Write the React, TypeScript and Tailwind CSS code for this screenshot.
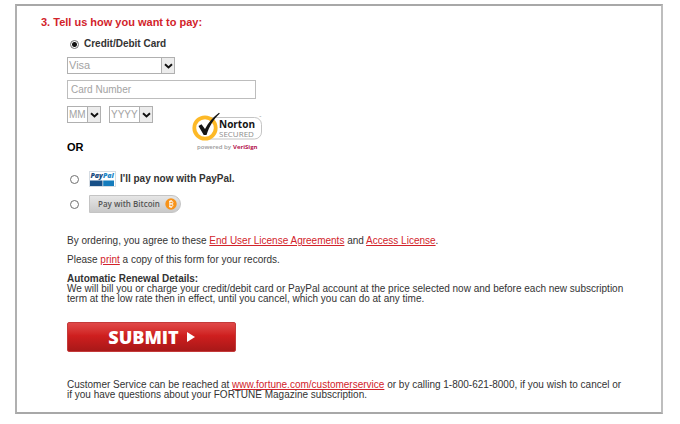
import type { ReactNode } from "react";

type DropdownProps = {
  label: string;
  options: string[];
  className: string;
};

function Dropdown({ label, options, className }: DropdownProps) {
  return (
    <div className={`relative h-[17px] border border-[#b0b0b0] bg-white ${className}`}>
      <select
        aria-label={label}
        className="block h-full w-full appearance-none bg-transparent pl-px leading-[15px] text-[#a3a3a3] outline-none"
      >
        {options.map((option) => (
          <option key={option}>{option}</option>
        ))}
      </select>
      <span className="pointer-events-none absolute inset-y-0 right-0 flex w-[13px] items-center justify-center border-l border-[#b0b0b0] bg-[#ececec]">
        <svg className="h-[6px] w-[9px]" viewBox="0 0 9 6" fill="none">
          <path d="M1 1.2 4.5 4.5 8 1.2" stroke="#111" strokeWidth="1.9" />
        </svg>
      </span>
    </div>
  );
}

function Radio({ id, checked }: { id: string; checked?: boolean }) {
  return (
    <input
      id={id}
      type="radio"
      name="payment"
      defaultChecked={checked}
      className="m-0 h-[9px] w-[9px] shrink-0 appearance-none rounded-full border border-[#707070] bg-white checked:bg-[radial-gradient(circle,#111_0_2px,#fff_3px)]"
    />
  );
}

function RedLink({ href, children }: { href: string; children: ReactNode }) {
  return (
    <a href={href} className="text-[#d2232a] underline">
      {children}
    </a>
  );
}

function NortonSeal() {
  return (
    <svg
      className="h-10 w-[72px]"
      viewBox="0 0 72 40"
      role="img"
      aria-label="Norton Secured, powered by VeriSign"
    >
      <path d="M14 5.5h48.500a7 7 0 0 1 7 7v7.500a7 7 0 0 1-7 7H14" fill="#fff" stroke="#b5b5b5" strokeWidth="0.8" />
      <circle cx="13" cy="16" r="10.700" fill="#fff" stroke="#fdb927" strokeWidth="3.800" />
      <path d="M6.500 14 9.500 12.200 13 17C16.500 10.500 21 5 27 .8l.8.8C21.500 7.500 17.500 14 14.500 23h-2.800Z" fill="#151515" />
      <text x="27" y="16" fontFamily="'Open Sans', sans-serif" fontSize="10" fontWeight="700" fill="#151515">
        Norton
      </text>
      <text x="27" y="25" fontFamily="'Open Sans', sans-serif" fontSize="8" fill="#8d8d8d">
        SECURED
      </text>
      <text x="5" y="37" fontFamily="'Open Sans', sans-serif" fontSize="6" fontWeight="600" fill="#999">
        powered by
      </text>
      <text x="41" y="37" fontFamily="'Open Sans', sans-serif" fontSize="6" fontWeight="700" fill="#b5124d">
        VeriSign
      </text>
      <text x="67" y="6" fontFamily="'Open Sans', sans-serif" fontSize="3" fill="#888">
        ™
      </text>
    </svg>
  );
}

function PayPalLogo() {
  return (
    <svg className="h-4 w-[27px]" viewBox="0 0 27 16" role="img" aria-label="PayPal">
      <rect x=".5" y=".5" width="26" height="15" fill="#fff" stroke="#d5dce3" />
      <text x="1.500" y="7" fontFamily="'Open Sans', sans-serif" fontSize="7" fontWeight="800" fontStyle="italic">
        <tspan fill="#174a80">Pay</tspan>
        <tspan fill="#1b86c8">Pal</tspan>
      </text>
      <path d="M1 9.500h12.500V15H1Z" fill="#174f87" />
      <path d="M14.200 9.500H25V15H14.200Z" fill="#147cbd" />
    </svg>
  );
}

function BitcoinBadge() {
  return (
    <span className="flex h-[18px] w-[92px] items-center justify-between rounded-l-[3px] rounded-r-full border border-[#c4c4c4] bg-linear-to-b from-[#e6e6e6] to-[#c9c9c9] pr-[3px] pl-2 font-['Open_Sans',sans-serif] text-[8px] leading-none font-semibold whitespace-nowrap text-[#555]">
      Pay with Bitcoin
      <svg className="h-3 w-3 shrink-0" viewBox="0 0 12 12">
        <circle cx="6" cy="6" r="5.700" fill="#f7931a" />
        <path
          d="M4 3.400h2.700a1.200 1.200 0 0 1 0 2.500H4.800h2.100a1.400 1.400 0 0 1 0 2.700H4M4.800 3.400v5.200M5.300 2.200v1M6.600 2.200v1M5.300 8.800v1M6.600 8.800v1"
          fill="none"
          stroke="#fff"
          strokeWidth=".9"
        />
      </svg>
    </span>
  );
}

export default function App() {
  return (
    <main className="bg-white pt-1 pr-[17px] pb-3 pl-[15px] font-['Liberation_Sans',Arial,sans-serif] text-[10px] leading-[10px] text-[#333]">
      <form
        className="border-2 border-t-[#a8a8a8] border-r-[#bebebe] border-b-[#a8a8a8] border-l-[#b0b0b0] pt-2 pr-8 pb-3 pl-6"
        onSubmit={(e) => e.preventDefault()}
      >
        <h2 className="text-[11px] leading-4 font-bold text-[#d2232a]">3. Tell us how you want to pay:</h2>

        <div className="pl-[26px]">
          {/* Card details */}
          <div className="mt-[6px] flex h-4 items-center gap-[5px] pl-[3px]">
            <Radio id="card" checked />
            <label htmlFor="card" className="font-bold">Credit/Debit Card</label>
          </div>
          <Dropdown
            label="Card type"
            options={["Visa", "MasterCard", "American Express"]}
            className="mt-[5px] w-[108px] text-[11px]"
          />
          <input
            type="text"
            aria-label="Card number"
            placeholder="Card Number"
            className="mt-[6px] block h-[19px] w-[189px] border border-[#bdbdbd] px-[3px] outline-none placeholder:text-[#a3a3a3]"
          />
          <div className="mt-[7px] flex items-start">
            <div className="w-[125px]">
              <div className="flex gap-2">
                <Dropdown label="Expiration month" options={["MM", "01", "02", "03"]} className="w-[34px]" />
                <Dropdown label="Expiration year" options={["YYYY", "2015", "2016", "2017"]} className="w-11" />
              </div>
              <p className="mt-4 text-[11px] leading-4 font-bold text-black">OR</p>
            </div>
            <div className="pt-[6px]">
              <NortonSeal />
            </div>
          </div>

          {/* Other ways to pay */}
          <div className="mt-[14px] flex h-5 items-center gap-[10px] pl-[3px]">
            <Radio id="paypal" />
            <label htmlFor="paypal" className="flex items-center gap-1 font-bold">
              <PayPalLogo />
              I'll pay now with PayPal.
            </label>
          </div>
          <div className="mt-[6px] flex h-[18px] items-center gap-[10px] pl-[3px]">
            <Radio id="bitcoin" />
            <label htmlFor="bitcoin">
              <BitcoinBadge />
            </label>
          </div>

          {/* Terms */}
          <p className="mt-[23px]">
            By ordering, you agree to these <RedLink href="#eula">End User License Agreements</RedLink> and{" "}
            <RedLink href="#access">Access License</RedLink>.
          </p>
          <p className="mt-[9px]">
            Please <RedLink href="#print">print</RedLink> a copy of this form for your records.
          </p>
          <h3 className="mt-[9px] font-bold">Automatic Renewal Details:</h3>
          <p>
            We will bill you or charge your credit/debit card or PayPal account at the price selected now and before each
            new subscription
            <br />
            term at the low rate then in effect, until you cancel, which you can do at any time.
          </p>

          <button
            type="submit"
            className="mt-[18px] flex h-[30px] w-[169px] items-center justify-center gap-2 rounded-[2px] border border-[#c43a3a] bg-linear-to-b from-[#e04848] via-[#cf1f1f] via-45% to-[#a81818] font-['Open_Sans',sans-serif] text-lg leading-none font-extrabold text-white"
          >
            SUBMIT
            <svg className="h-[10px] w-2" viewBox="0 0 8 10">
              <path d="M0 0 8 5 0 10Z" fill="currentColor" />
            </svg>
          </button>

          <p className="mt-7">
            Customer Service can be reached at{" "}
            <RedLink href="#customerservice">www.fortune.com/customerservice</RedLink> or by calling 1-800-621-8000, if
            you wish to cancel or
            <br />
            if you have questions about your FORTUNE Magazine subscription.
          </p>
        </div>
      </form>
    </main>
  );
}
